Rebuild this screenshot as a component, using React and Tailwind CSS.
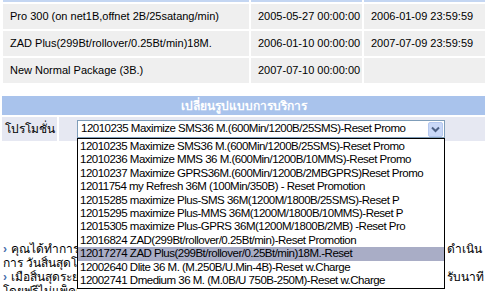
import React from 'react';

const rows = [
  { name: 'Pro 300 (on net1B,offnet 2B/25satang/min)', start: '2005-05-27 00:00:00', end: '2006-01-09 23:59:59' },
  { name: 'ZAD Plus(299Bt/rollover/0.25Bt/min)18M.', start: '2006-01-10 00:00:00', end: '2007-07-09 23:59:59' },
  { name: 'New Normal Package (3B.)', start: '2007-07-10 00:00:00', end: '' },
];

const promos = [
  '12010235 Maximize SMS36 M.(600Min/1200B/25SMS)-Reset Promo',
  '12010236 Maximize MMS 36 M.(600Min/1200B/10MMS)-Reset Promo',
  '12010237 Maximize GPRS36M.(600Min/1200B/2MBGPRS)Reset Promo',
  '12011754 my Refresh 36M (100Min/350B) - Reset Promotion',
  '12015285 maximize Plus-SMS 36M(1200M/1800B/25SMS)-Reset P',
  '12015295 maximize Plus-MMS 36M(1200M/1800B/10MMS)-Reset P',
  '12015305 maximize Plus-GPRS 36M(1200M/1800B/2MB) -Reset Pro',
  '12016824 ZAD(299Bt/rollover/0.25Bt/min)-Reset Promotion',
  '12017274 ZAD Plus(299Bt/rollover/0.25Bt/min)18M.-Reset',
  '12002640 Dlite 36 M. (M.250B/U.Min-4B)-Reset w.Charge',
  '12002741 Dmedium 36 M. (M.0B/U 750B-250M)-Reset w.Charge',
];

const selected = 8;

function Bullet() {
  return <span className="mr-1 font-bold text-[#4a6fae]">›</span>;
}

// a note line: left part runs under the open list, right part peeks out after it
function NoteLine({ left, right }) {
  return (
    <div className="flex h-[14px] justify-between whitespace-nowrap pl-[3px]">
      <div className="w-[74px] overflow-hidden">{left}</div>
      <div className="w-[38px] overflow-hidden">{right}</div>
    </div>
  );
}

export default function App() {
  return (
    <div className="relative h-[291px] w-[485px] overflow-hidden bg-white font-['Liberation_Sans',Tahoma,sans-serif] text-[11px] text-black">
      {/* current packages table */}
      <div className="grid grid-cols-[246px_111px_1fr] gap-[2px] pl-[3px]">
        <div className="h-[2px] bg-[#c4d6f2]" />
        <div className="h-[2px] bg-[#c4d6f2]" />
        <div className="h-[2px] bg-[#c4d6f2]" />
        {rows.map((r) => (
          <React.Fragment key={r.name}>
            <div className="flex h-[25px] items-center bg-[#efefef] px-[7px] whitespace-nowrap">{r.name}</div>
            <div className="flex h-[25px] items-center bg-[#efefef] px-[7px] whitespace-nowrap">{r.start}</div>
            <div className="flex h-[25px] items-center bg-[#efefef] px-[7px] whitespace-nowrap">{r.end}</div>
          </React.Fragment>
        ))}
      </div>

      {/* change promotion form */}
      <div className="mt-[13px] flex flex-col gap-[2px] pl-[2px]">
        <div className="flex h-[19px] items-center justify-center bg-[#a9c3ec] text-[12px] font-bold text-white">
          เปลี่ยนรูปแบบการบริการ
        </div>
        <div className="flex h-[24px] gap-[2px]">
          <div className="flex w-[55px] items-center bg-[#e6e8f2] pl-[3px] text-[12px]">โปรโมชั่น</div>
          <div className="flex flex-1 items-center bg-[#e6e8f2] pl-[18px]">
            <div className="flex h-[18px] w-[368px] items-center justify-between border border-[#7f9db9] bg-white pl-[3px] pr-[1px] text-[11.5px] tracking-[-0.5px]">
              <span className="whitespace-nowrap">{promos[0]}</span>
              <span className="flex h-[15px] w-[15px] items-center justify-center rounded-[2px] border border-[#b5c8ef] bg-[#c9d8f8]">
                <svg width="9" height="7" viewBox="0 0 9 7">
                  <path d="M1 1.5 L4.5 5 L8 1.5" fill="none" stroke="#4d6185" strokeWidth="2" />
                </svg>
              </span>
            </div>
          </div>
        </div>
      </div>

      {/* notes below the form */}
      <div className="mt-[101px] text-[12px] leading-[14px]">
        <NoteLine left={<><Bullet />คุณได้ทำการเปลี่ยน</>} right="ดำเนิน" />
        <NoteLine left="การ วันสิ้นสุดโปรโมชั่น" right="" />
        <NoteLine left={<><Bullet />เมื่อสิ้นสุดระยะเวลา</>} right="รับนาที" />
        <NoteLine left="โดยฟรีไม่แพ็คเกจ 22" right="" />
      </div>

      {/* open dropdown list */}
      <ul className="absolute left-[77px] top-[138px] w-[368px] border border-black bg-white py-[1px] text-[11.5px] leading-[13.4px] tracking-[-0.5px]">
        {promos.map((p, i) => (
          <li key={p} className={`whitespace-nowrap pl-[2px] ${i === selected ? 'bg-[#a9adc6]' : ''}`}>{p}</li>
        ))}
      </ul>
    </div>
  );
}
